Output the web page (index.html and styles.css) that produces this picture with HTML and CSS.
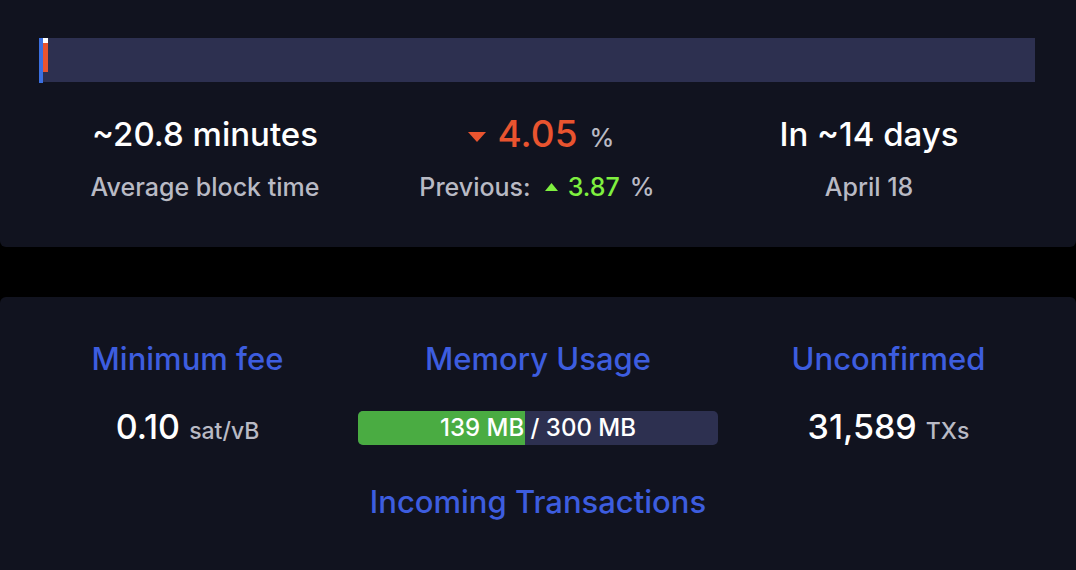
FILE: index.html
```html
<!DOCTYPE html>
<html>
<head>
<meta charset="utf-8">
<link rel="stylesheet" href="styles.css">
</head>
<body>
<div class="card card-top">
  <div class="progress">
    <div class="marker-blue"></div>
    <div class="marker-col">
      <div class="marker-white"></div>
      <div class="marker-red"></div>
    </div>
  </div>
  <div class="stats">
    <div class="stat">
      <div class="big">~20.8 minutes</div>
      <div class="sub">Average block time</div>
    </div>
    <div class="stat">
      <div class="big row row-change">
        <svg class="tri-down" width="18" height="10" viewBox="0 0 18 10"><path d="M0 0 H18 L9 10 Z" fill="#e9542f"/></svg>
        <span class="red">4.05</span>
        <span class="pct">%</span>
      </div>
      <div class="sub row row-prev">
        <span>Previous:</span>
        <svg class="tri-up" width="13" height="8" viewBox="0 0 13 8"><path d="M0 8 H13 L6.5 0 Z" fill="#7ff03f"/></svg>
        <span class="green">3.87</span>
        <span>%</span>
      </div>
    </div>
    <div class="stat">
      <div class="big">In ~14 days</div>
      <div class="sub">April 18</div>
    </div>
  </div>
</div>
<div class="card card-bottom">
  <div class="cols">
    <div class="col">
      <div class="title">Minimum fee</div>
      <div class="value">0.10 <span class="unit">sat/vB</span></div>
    </div>
    <div class="col">
      <div class="title">Memory Usage</div>
      <div class="membar">
        <div class="memfill" style="width: 46.3%"></div>
        <div class="memtext">139 MB / 300 MB</div>
      </div>
    </div>
    <div class="col">
      <div class="title">Unconfirmed</div>
      <div class="value">31,589 <span class="unit">TXs</span></div>
    </div>
  </div>
  <div class="title incoming">Incoming Transactions</div>
</div>
</body>
</html>
```
FILE: styles.css
```css
html, body {
  margin: 0;
  padding: 0;
  background: #000;
  font-family: Inter, "Noto Sans", "Liberation Sans", sans-serif;
  font-weight: 500;
  overflow: hidden;
}
.card {
  background: #11131f;
}
.card-top {
  border-radius: 0 0 6px 6px;
  padding: 38px 41px 47px 39px;
}
.progress {
  height: 44px;
  background: #2d3050;
  display: flex;
  align-items: flex-start;
}
.marker-blue {
  width: 4px;
  height: 45px;
  background: #3b6fe0;
}
.marker-col {
  width: 5px;
  display: flex;
  flex-direction: column;
}
.marker-white {
  height: 5px;
  background: #ffffff;
}
.marker-red {
  height: 29px;
  background: #e9542f;
}
.stats {
  display: grid;
  grid-template-columns: 1fr 1fr 1fr;
  margin-top: 33px;
}
.stat {
  display: flex;
  flex-direction: column;
  align-items: center;
}
.big {
  font-size: 33px;
  line-height: 38px;
  color: #ffffff;
  height: 38px;
}
.sub {
  margin-top: 21px;
  font-size: 25px;
  line-height: 26px;
  color: #b9bac4;
}
.row {
  display: flex;
  align-items: baseline;
  gap: 12px;
}
.row-change {
  padding-left: 8px;
}
.row-prev {
  gap: 10px;
}
.big.row .red {
  font-size: 37px;
  color: #e9542f;
}
.big.row .pct {
  font-size: 25px;
  color: #b9bac4;
}
.tri-down {
  align-self: center;
  margin-top: 6px;
}
.tri-up {
  align-self: center;
  margin-left: 4px;
}
.green {
  color: #7ff03f;
}
.card-bottom {
  margin-top: 50px;
  border-radius: 6px 6px 0 0;
  padding: 46px 17px 80px 17px;
}
.cols {
  display: grid;
  grid-template-columns: 1fr 1fr 1fr;
}
.col {
  display: flex;
  flex-direction: column;
  align-items: center;
}
.title {
  font-size: 31px;
  line-height: 32px;
  color: #3d5ddf;
  text-align: center;
}
.value {
  margin-top: 35px;
  font-size: 34px;
  line-height: 34px;
  color: #ffffff;
}
.unit {
  font-size: 23px;
  color: #b9bac4;
}
.membar {
  margin-top: 36px;
  width: 360px;
  height: 34px;
  border-radius: 5px;
  background: #2d3050;
  overflow: hidden;
  display: grid;
}
.memfill {
  grid-area: 1 / 1;
  height: 100%;
  background: #4aac42;
}
.memtext {
  grid-area: 1 / 1;
  color: #ffffff;
  font-size: 24px;
  line-height: 34px;
  text-align: center;
}
.incoming {
  margin-top: 38px;
}
```
